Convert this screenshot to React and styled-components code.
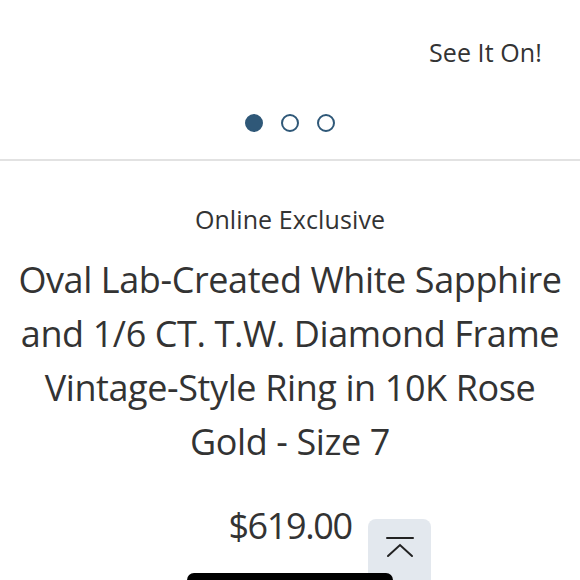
import React from 'react'
import styled, { createGlobalStyle } from 'styled-components'

const Global = createGlobalStyle`
    body {
        margin: 0;
        background: #fff;
        font-family: "Open Sans", "Noto Sans", sans-serif;
        color: #333;
    }
`

const Page = styled.div`
    position: relative;
    width: 580px;
    height: 580px;
    overflow: hidden;
`

const Topo = styled.header`
    height: 159px;
    border-bottom: 2px solid #e2e2e2;
    display: flex;
    flex-direction: column;
    align-items: flex-end;
`

const VerNoCorpo = styled.div`
    margin: 34px 38px 0 0;
    font-size: 25px;
    line-height: 36px;
    letter-spacing: 0.1px;
`

const Pontos = styled.div`
    align-self: center;
    display: flex;
    gap: 18px;
    margin-top: 44px;
`

const Ponto = styled.span`
    width: 18px;
    height: 18px;
    box-sizing: border-box;
    border-radius: 50%;
    border: 2px solid #2f5878;
    background: ${p => (p.$ativo ? '#2f5878' : 'transparent')};
`

const Info = styled.section`
    text-align: center;
    padding: 0 12px;
`

const Selo = styled.div`
    margin-top: 40px;
    font-size: 25px;
    line-height: 36px;
    letter-spacing: 0.1px;
`

const Titulo = styled.h1`
    margin: 16px 0 0;
    font-weight: 400;
    font-size: 36px;
    line-height: 54px;
    letter-spacing: -0.4px;
`

const Preco = styled.div`
    margin-top: 32px;
    font-size: 36px;
    line-height: 50px;
    letter-spacing: -1.4px;
`

const BotaoTopo = styled.button`
    position: absolute;
    left: 368px;
    top: 519px;
    width: 63px;
    height: 80px;
    border: none;
    border-radius: 8px;
    background: #e3e8ee;
    padding: 0;
    display: flex;
    justify-content: center;
    align-items: flex-start;
    padding-top: 16px;
`

const Indicador = styled.div`
    position: absolute;
    left: 187px;
    top: 573px;
    width: 206px;
    height: 14px;
    border-radius: 7px;
    background: #000;
`

export default function App() {
    return (
        <>
            <Global />
            <Page>
                <Topo>
                    <VerNoCorpo>See It On!</VerNoCorpo>
                    <Pontos>
                        <Ponto $ativo />
                        <Ponto />
                        <Ponto />
                    </Pontos>
                </Topo>
                <Info>
                    <Selo>Online Exclusive</Selo>
                    <Titulo>
                        Oval Lab-Created White Sapphire and 1/6 CT. T.W. Diamond Frame
                        Vintage-Style Ring in 10K Rose Gold - Size 7
                    </Titulo>
                    <Preco>$619.00</Preco>
                </Info>
                <BotaoTopo aria-label="Voltar ao topo">
                    <svg width="30" height="24" viewBox="0 0 30 24" fill="none" stroke="#222" strokeWidth="2" strokeLinecap="round">
                        <line x1="2" y1="3" x2="28" y2="3" />
                        <polyline points="3,21 15,10 27,21" />
                    </svg>
                </BotaoTopo>
                <Indicador />
            </Page>
        </>
    )
}
